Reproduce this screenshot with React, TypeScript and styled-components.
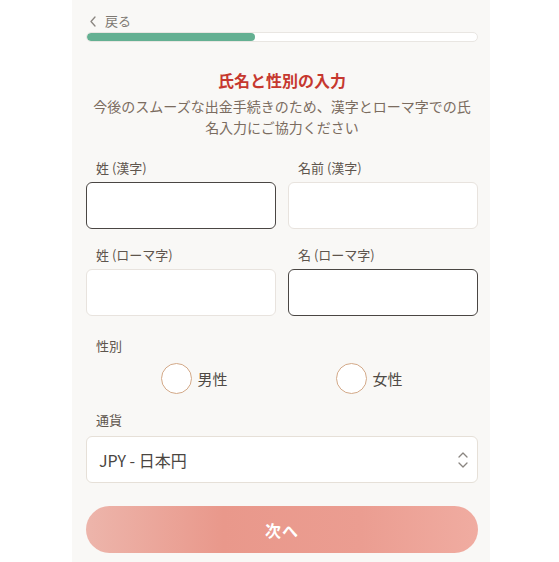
import React from "react";
import styled, { createGlobalStyle } from "styled-components";

const GlobalStyle = createGlobalStyle`
  html, body {
    margin: 0;
    padding: 0;
    background: #ffffff;
    font-family: "Noto Sans CJK JP", "Noto Sans", sans-serif;
  }
  * { box-sizing: border-box; }
`;

export default function App() {
  return (
    <>
      <GlobalStyle />
      <Page>
        <Panel>
          <BackLink>
            <svg width="8" height="11" viewBox="0 0 8 11" fill="none">
              <path d="M6 1L2 5.5L6 10" stroke="#8a8580" strokeWidth="1.3" strokeLinecap="round" strokeLinejoin="round" />
            </svg>
            戻る
          </BackLink>
          <Progress>
            <ProgressFill style={{ width: "43%" }} />
          </Progress>

          <Title>氏名と性別の入力</Title>
          <Lead>
            今後のスムーズな出金手続きのため、漢字とローマ字での氏
            <br />
            名入力にご協力ください
          </Lead>

          <FieldGrid>
            <Field>
              <Label>姓 (漢字)</Label>
              <TextInput focused />
            </Field>
            <Field>
              <Label>名前 (漢字)</Label>
              <TextInput />
            </Field>
            <Field>
              <Label>姓 (ローマ字)</Label>
              <TextInput />
            </Field>
            <Field>
              <Label>名 (ローマ字)</Label>
              <TextInput focused />
            </Field>
          </FieldGrid>

          <Section>
            <Label>性別</Label>
            <RadioRow>
              <RadioOption>
                <RadioCircle />
                男性
              </RadioOption>
              <RadioOption>
                <RadioCircle />
                女性
              </RadioOption>
            </RadioRow>
          </Section>

          <Section tight>
            <Label>通貨</Label>
            <Select>
              JPY - 日本円
              <svg width="12" height="20" viewBox="0 0 12 20" fill="none">
                <path d="M2 7L6 3L10 7" stroke="#8a8580" strokeWidth="1.3" strokeLinecap="round" strokeLinejoin="round" />
                <path d="M2 13L6 17L10 13" stroke="#8a8580" strokeWidth="1.3" strokeLinecap="round" strokeLinejoin="round" />
              </svg>
            </Select>
          </Section>

          <NextButton>次へ</NextButton>
        </Panel>
      </Page>
    </>
  );
}

const Page = styled.div`
  display: flex;
  justify-content: flex-start;
  padding-left: 72px;
  min-height: 100vh;
`;
const Panel = styled.div`
  width: 418px;
  min-height: 562px;
  background: #f9f8f6;
  padding: 12px 12px 0 14px;
  display: flex;
  flex-direction: column;
`;
const BackLink = styled.div`
  display: flex;
  align-items: center;
  gap: 8px;
  padding-left: 3px;
  font-size: 13px;
  line-height: 18px;
  color: #7d7872;
`;
const Progress = styled.div`
  margin-top: 2px;
  height: 10px;
  border-radius: 5px;
  background: #ffffff;
  border: 1px solid #e9e6e2;
  overflow: hidden;
`;
const ProgressFill = styled.div`
  height: 100%;
  background: #64b092;
  border-radius: 5px;
`;
const Title = styled.h1`
  margin: 26px 0 0;
  text-align: center;
  font-size: 16px;
  line-height: 24px;
  font-weight: 700;
  color: #c6382f;
`;
const Lead = styled.p`
  margin: 4px 0 0;
  text-align: center;
  font-size: 14px;
  line-height: 21px;
  color: #7b6c60;
`;
const FieldGrid = styled.div`
  margin-top: 20px;
  display: grid;
  grid-template-columns: 1fr 1fr;
  column-gap: 12px;
  row-gap: 16px;
`;
const Field = styled.div`
  display: flex;
  flex-direction: column;
`;
const Label = styled.div`
  padding-left: 10px;
  font-size: 13px;
  line-height: 20px;
  color: #5e554d;
  margin-bottom: 4px;
`;
const TextInput = styled.div<{ focused?: boolean }>`
  height: 47px;
  background: #ffffff;
  border-radius: 6px;
  border: ${(p) => (p.focused ? "1.5px solid #4a4643" : "1px solid #e8e3de")};
`;
const Section = styled.div<{ tight?: boolean }>`
  margin-top: ${(p) => (p.tight ? "16px" : "20px")};
  display: flex;
  flex-direction: column;
`;
const RadioRow = styled.div`
  display: grid;
  grid-template-columns: 1fr 1fr;
  padding: 0 21px;
  margin-top: 3px;
`;
const RadioOption = styled.label`
  justify-self: center;
  display: flex;
  align-items: center;
  gap: 5px;
  font-size: 15px;
  color: #4f4a45;
`;
const RadioCircle = styled.span`
  width: 31px;
  height: 31px;
  border-radius: 50%;
  background: #ffffff;
  border: 1.5px solid #d3a988;
`;
const Select = styled.div`
  height: 47px;
  margin-top: 2px;
  background: #ffffff;
  border: 1px solid #e6e0d8;
  border-radius: 6px;
  display: flex;
  align-items: center;
  justify-content: space-between;
  padding: 0 8px 0 12px;
  font-size: 16px;
  color: #4a4541;
`;
const NextButton = styled.button`
  margin-top: 23px;
  height: 47px;
  border: none;
  border-radius: 24px;
  background: linear-gradient(90deg, #edb5ab 0%, #e9988b 35%, #eb9d91 70%, #f0aca1 100%);
  color: #ffffff;
  font-family: inherit;
  font-size: 16px;
  font-weight: 700;
  letter-spacing: 1px;
`;
